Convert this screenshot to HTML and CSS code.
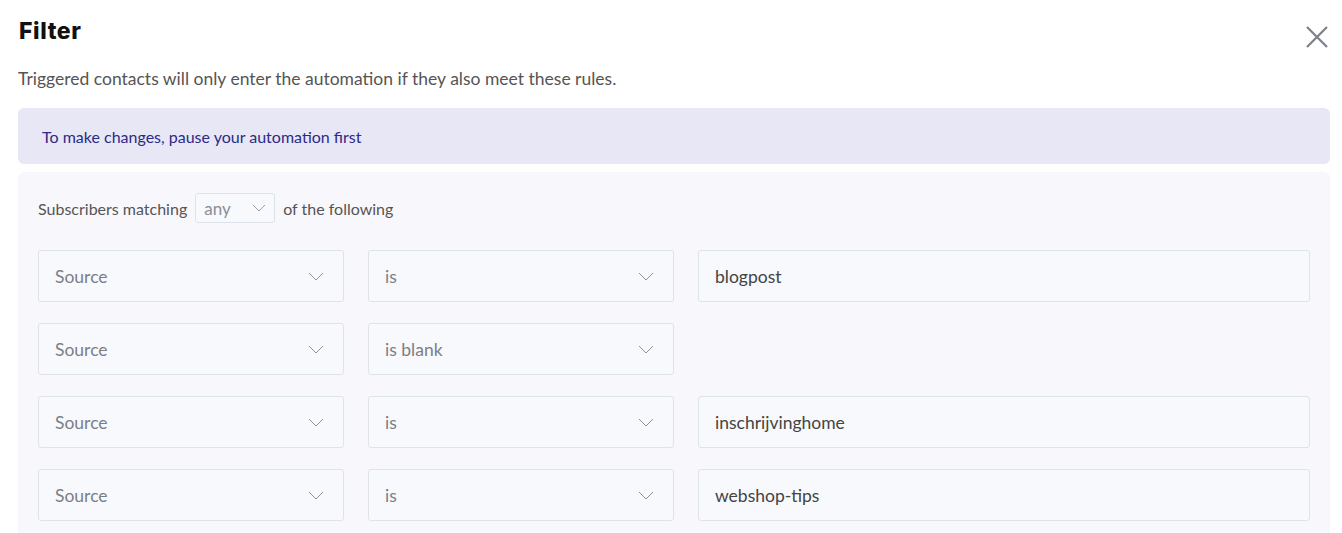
FILE: index.html
```html
<!DOCTYPE html>
<html lang="en">
<head>
    <meta charset="UTF-8">
    <meta name="viewport" content="width=device-width, initial-scale=1.0">
    <title>Filter</title>
    <link rel="stylesheet" href="styles.css">
</head>
<body>
    <div class="modal">
        <header class="modal-header">
            <h1>Filter</h1>
            <button class="close-button" aria-label="Close">
                <svg width="22" height="22" viewBox="0 0 22 22">
                    <path d="M1 1 L21 21 M21 1 L1 21" stroke="#7b818b" stroke-width="2.2" fill="none"/>
                </svg>
            </button>
        </header>
        <p class="intro">Triggered contacts will only enter the automation if they also meet these rules.</p>
        <div class="notice">To make changes, pause your automation first</div>
        <div class="panel">
            <div class="matching">
                <span>Subscribers matching</span>
                <div class="mini-select">
                    <span>any</span>
                    <svg width="14" height="8" viewBox="0 0 14 8"><path d="M1 1 L7 7 L13 1" stroke="#9aa1ab" stroke-width="1" fill="none"/></svg>
                </div>
                <span>of the following</span>
            </div>
            <div class="rules">
                <div class="rule">
                    <div class="select"><span>Source</span><svg width="16" height="9" viewBox="0 0 16 9"><path d="M1 1 L8 8 L15 1" stroke="#8d949e" stroke-width="1" fill="none"/></svg></div>
                    <div class="select"><span>is</span><svg width="16" height="9" viewBox="0 0 16 9"><path d="M1 1 L8 8 L15 1" stroke="#8d949e" stroke-width="1" fill="none"/></svg></div>
                    <div class="field">blogpost</div>
                </div>
                <div class="rule">
                    <div class="select"><span>Source</span><svg width="16" height="9" viewBox="0 0 16 9"><path d="M1 1 L8 8 L15 1" stroke="#8d949e" stroke-width="1" fill="none"/></svg></div>
                    <div class="select"><span>is blank</span><svg width="16" height="9" viewBox="0 0 16 9"><path d="M1 1 L8 8 L15 1" stroke="#8d949e" stroke-width="1" fill="none"/></svg></div>
                </div>
                <div class="rule">
                    <div class="select"><span>Source</span><svg width="16" height="9" viewBox="0 0 16 9"><path d="M1 1 L8 8 L15 1" stroke="#8d949e" stroke-width="1" fill="none"/></svg></div>
                    <div class="select"><span>is</span><svg width="16" height="9" viewBox="0 0 16 9"><path d="M1 1 L8 8 L15 1" stroke="#8d949e" stroke-width="1" fill="none"/></svg></div>
                    <div class="field">inschrijvinghome</div>
                </div>
                <div class="rule">
                    <div class="select"><span>Source</span><svg width="16" height="9" viewBox="0 0 16 9"><path d="M1 1 L8 8 L15 1" stroke="#8d949e" stroke-width="1" fill="none"/></svg></div>
                    <div class="select"><span>is</span><svg width="16" height="9" viewBox="0 0 16 9"><path d="M1 1 L8 8 L15 1" stroke="#8d949e" stroke-width="1" fill="none"/></svg></div>
                    <div class="field">webshop-tips</div>
                </div>
            </div>
        </div>
    </div>
</body>
</html>
```

FILE: styles.css
```css
body {
    font-family: Lato, 'Open Sans', sans-serif;
    background-color: white;
    color: #555;
    margin: 0;
    padding: 0;
    overflow: hidden;
}
.modal {
    padding: 0 12px 0 18px;
}
.modal-header {
    display: flex;
    justify-content: space-between;
    align-items: flex-start;
    height: 57px;
}
h1 {
    font-family: Inter, 'Noto Sans', sans-serif;
    font-size: 23px;
    font-weight: 800;
    color: #111;
    margin: 17px 0 0 1px;
    letter-spacing: 0.6px;
}
.close-button {
    background: none;
    border: none;
    padding: 0;
    margin-top: 26px;
    margin-right: 2px;
    cursor: pointer;
}
.intro {
    margin: 10px 0 0;
    font-size: 17.5px;
    line-height: 24px;
    color: #555;
}
.notice {
    margin-top: 17px;
    height: 56px;
    display: flex;
    align-items: center;
    padding: 0 24px;
    background-color: #e7e7f6;
    border-radius: 6px;
    color: #2e2a87;
    font-size: 16px;
}
.panel {
    margin-top: 8px;
    background-color: #f8f8fc;
    border-radius: 6px;
    padding: 21px 20px 20px;
}
.matching {
    display: flex;
    align-items: center;
    gap: 8px;
    font-size: 16px;
    color: #555;
}
.mini-select {
    width: 80px;
    height: 30px;
    box-sizing: border-box;
    display: flex;
    align-items: center;
    justify-content: space-between;
    padding: 0 8px 0 8px;
    border: 1px solid #dde3ea;
    border-radius: 3px;
    background-color: #f7f9fc;
    color: #8a8f96;
    font-size: 17px;
}
.rules {
    margin-top: 27px;
    display: flex;
    flex-direction: column;
    gap: 21px;
}
.rule {
    display: grid;
    grid-template-columns: 306px 306px 1fr;
    gap: 24px;
}
.select, .field {
    height: 52px;
    box-sizing: border-box;
    display: flex;
    align-items: center;
    padding: 0 19px 0 16px;
    border: 1px solid #dfe3ea;
    border-radius: 3px;
    background-color: #f7f9fc;
    font-size: 17.5px;
}
.select {
    justify-content: space-between;
    color: #7b7f86;
}
.field {
    color: #444;
}
```
